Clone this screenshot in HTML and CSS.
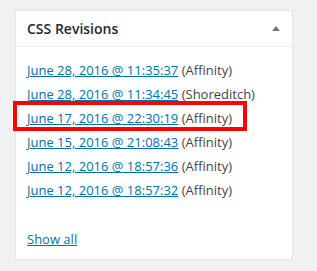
FILE: index.html
```html
<!DOCTYPE html>
<html lang="en">
<head>
    <meta charset="UTF-8">
    <title>CSS Revisions</title>
    <link rel="stylesheet" href="styles.css">
</head>
<body>
    <div class="postbox">
        <div class="postbox-header">
            <h2>CSS Revisions</h2>
            <span class="toggle"></span>
        </div>
        <div class="inside">
            <ul class="revisions">
                <li><a href="#">June 28, 2016 @ 11:35:37</a> (Affinity)</li>
                <li><a href="#">June 28, 2016 @ 11:34:45</a> (Shoreditch)</li>
                <li class="marked"><a href="#">June 17, 2016 @ 22:30:19</a> (Affinity)</li>
                <li><a href="#">June 15, 2016 @ 21:08:43</a> (Affinity)</li>
                <li><a href="#">June 12, 2016 @ 18:57:36</a> (Affinity)</li>
                <li><a href="#">June 12, 2016 @ 18:57:32</a> (Affinity)</li>
            </ul>
            <a class="show-all" href="#">Show all</a>
        </div>
    </div>
</body>
</html>
```

FILE: styles.css
```css
body {
    margin: 0;
    background: #f1f1f1;
    font-family: "Open Sans", "Liberation Sans", sans-serif;
    font-size: 13px;
    color: #444;
}

.postbox {
    margin: 10px 0 0 15px;
    width: 278px;
    box-sizing: border-box;
    background: #fff;
    border: 1px solid #e5e5e5;
    box-shadow: 0 1px 1px rgba(0, 0, 0, 0.04);
}

.postbox-header {
    display: flex;
    align-items: center;
    justify-content: space-between;
    height: 35px;
    padding: 0 12px 0 11px;
    border-bottom: 1px solid #eee;
}

.postbox-header h2 {
    margin: 0;
    font-size: 14px;
    font-weight: 600;
    color: #23282d;
}

.toggle {
    width: 0;
    height: 0;
    border-left: 4px solid transparent;
    border-right: 4px solid transparent;
    border-bottom: 5px solid #72777c;
}

.inside {
    padding: 11px 11px 8px;
}

.revisions {
    list-style: none;
    margin: 0;
    padding: 0;
}

.revisions li {
    line-height: 24px;
    white-space: nowrap;
}

.revisions li.marked {
    position: relative;
}

.revisions li.marked::after {
    content: "";
    position: absolute;
    left: -14px;
    top: -5px;
    width: 234px;
    height: 30px;
    box-sizing: border-box;
    border: 4px solid #f00;
}

a {
    color: #0073aa;
}

.show-all {
    display: block;
    margin-top: 25px;
    line-height: 24px;
    width: max-content;
}
```
